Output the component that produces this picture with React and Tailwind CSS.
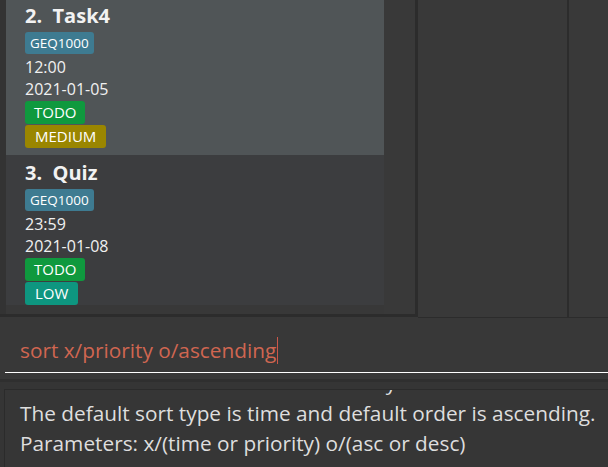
import React from "react";

function Card({ index, name, module, time, date, status, priority, bg }) {
  return (
    <div className={"pl-[19px] pt-[4px] pb-[7px] shrink-0 " + bg}>
      <div className="h-[28px] leading-[28px] text-[20px] font-bold text-[#f2f2f2] whitespace-pre">
        {index + ".  " + name}
      </div>
      <div className="mt-[2px] flex">
        <span className="h-[22px] leading-[22px] px-[5px] rounded-[3px] bg-[#3e7b91] text-[13.5px] text-white">
          {module}
        </span>
      </div>
      <div className="mt-[2px] h-[22px] leading-[22px] text-[16px] text-[#f0f0f0]">{time}</div>
      <div className="h-[22px] leading-[22px] text-[16px] text-[#f0f0f0]">{date}</div>
      <div className="mt-[1px] flex">
        <span className="h-[23px] leading-[23px] px-[9px] rounded-[3px] bg-[#0f993e] text-[15px] text-white">
          {status}
        </span>
      </div>
      <div className="mt-[1px] flex">
        <span className={"h-[23px] leading-[23px] px-[10px] rounded-[3px] text-[15px] text-white " + priority.bg}>
          {priority.label}
        </span>
      </div>
    </div>
  );
}

export default function App() {
  return (
    <div className="w-[608px] h-[467px] bg-[#383838] overflow-hidden flex flex-col font-['Open_Sans',sans-serif]">
      {/* top region */}
      <div className="flex h-[318px] shrink-0 items-start">
        <div className="w-[418px] h-[317px] shrink-0 flex border-r-[3px] border-b-[3px] border-[#2c2c2c] bg-[#383838]">
          <div className="w-[6px] h-full bg-[#333333]" />
          <div className="w-[378px] h-[305px] overflow-hidden flex flex-col">
            <div className="-mt-[2px] flex flex-col">
              <Card
                index="2"
                name="Task4"
                module="GEQ1000"
                time="12:00"
                date="2021-01-05"
                status="TODO"
                priority={{ label: "MEDIUM", bg: "bg-[#9a8600]" }}
                bg="bg-[#505557]"
              />
              <Card
                index="3"
                name="Quiz"
                module="GEQ1000"
                time="23:59"
                date="2021-01-08"
                status="TODO"
                priority={{ label: "LOW", bg: "bg-[#0e9680]" }}
                bg="bg-[#3c3d3f]"
              />
            </div>
          </div>
          <div className="flex-1 h-full bg-[#393939]" />
        </div>
        <div className="w-[151px] h-[318px] shrink-0 bg-[#393939] border-r-2 border-b border-[#2c2c2c]" />
        <div className="flex-1 h-[318px] bg-[#393939] border-b border-[#2c2c2c]" />
      </div>

      {/* command box */}
      <div className="h-[61px] shrink-0 pt-[18px] pl-[5px]">
        <div className="h-[28px] leading-[28px] pl-[15px] text-[20.8px] font-normal text-[#d06651] whitespace-pre flex items-center border-b border-white box-content pb-[8px]">
          <span>sort x/priority o/ascending</span>
          <span className="inline-block w-[1px] h-[27px] bg-[#c9574a] ml-[1px]" />
        </div>
      </div>
      <div className="h-[3px] shrink-0 bg-[#2f2f2f]" />

      {/* result display */}
      <div className="flex-1 pl-[4px] pt-[7px] bg-[#353535] overflow-hidden">
        <div className="h-full border-l border-t border-[#2b2b2b] bg-[#363636] overflow-hidden pl-[15px]">
          <div className="-mt-[23px] text-[20.8px] leading-[30.5px] text-[#dedede] whitespace-nowrap">
            <div>sort: Sorts all the tasks in a list in a way</div>
            <div>The default sort type is time and default order is ascending.</div>
            <div>Parameters: x/(time or priority) o/(asc or desc)</div>
            <div>Example: sort x/priority o/desc</div>
          </div>
        </div>
      </div>
    </div>
  );
}
